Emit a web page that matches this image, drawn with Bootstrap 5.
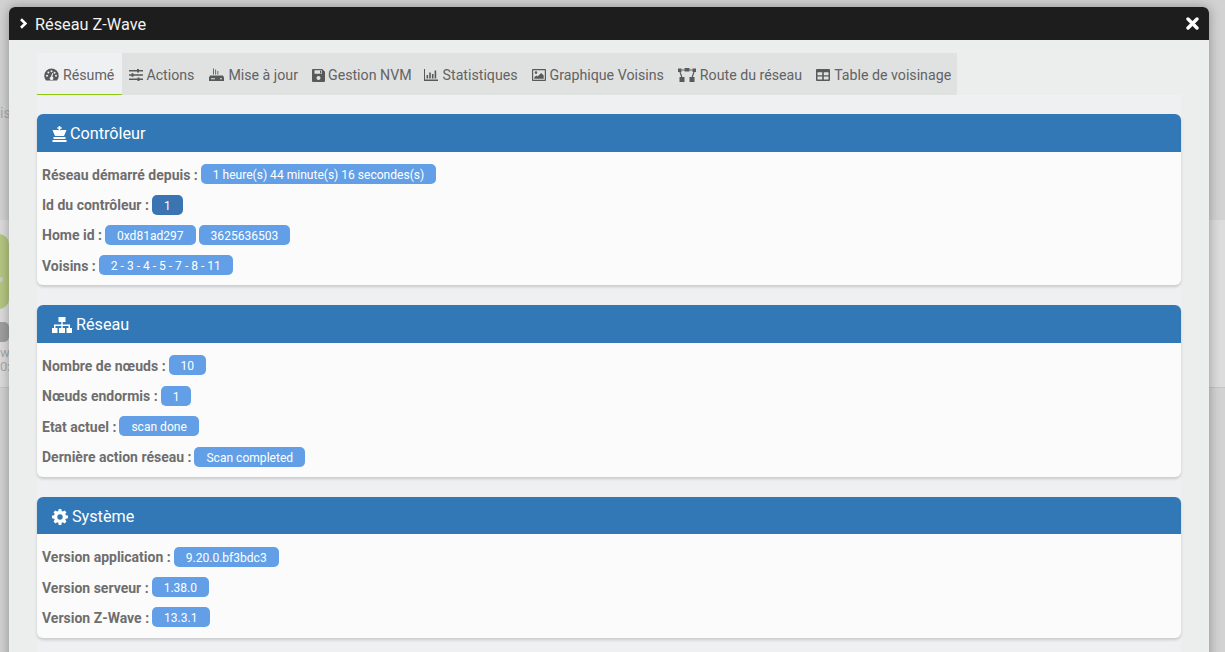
<!DOCTYPE html>
<html lang="fr"><head><meta charset="utf-8"><title>Réseau Z-Wave</title>
<link href="https://cdn.jsdelivr.net/npm/bootstrap@5.3.0/dist/css/bootstrap.min.css" rel="stylesheet">
<style>
html,body{height:652px;overflow:hidden}
body{font-family:Roboto,"Liberation Sans",sans-serif;background:#d2d2d2;position:relative;color:#6b6b6b}
.bg-band{position:absolute;left:0;right:0;top:220px;height:168px;background:#dcdcdc;border-bottom:1px solid #c6c6c6}
.bg-top{position:absolute;left:0;top:103px;font-size:14px;color:#a9a9a9}
.bg-green{position:absolute;left:-60px;top:234px;width:69px;height:75px;background:#b4c681;border-radius:10px}
.bg-dot{position:absolute;left:0;top:277px;width:3px;height:5px;background:#c8ccc0;border-radius:0 3px 3px 0}
.bg-pill{position:absolute;left:-30px;top:322px;width:39px;height:20px;background:#9f9f9f;border-radius:5px}
.bg-txt{position:absolute;left:0;font-size:13px;line-height:14px;color:#a9a9a9;white-space:nowrap}
.bg-l1{top:346px}
.bg-l2{top:360px}
.zw-window{position:absolute;left:9px;top:7px;width:1200px;height:700px;background:#eceeee;border-radius:6px 6px 0 0;box-shadow:0 0 12px rgba(0,0,0,.32);overflow:hidden}
.zw-title{height:33px;background:#1d1d1d;color:#f2f2f2;font-size:16.3px;padding:0 10px}
.zw-title .ttl{margin-left:7px;padding-top:2px;line-height:24px;font-weight:400}
.zw-body{padding:13px 28px 0}
.zw-tabs{width:920px;height:42px;background:#e0e2e1;flex-wrap:nowrap;border:0;margin:0}
.zw-tabs .nav-link{height:42px;margin:0;padding:2px 7px 0;border:0;border-radius:0;color:#636363;font-size:14.2px;line-height:40px;display:flex;align-items:center;gap:4px;white-space:nowrap;background:none}
.zw-tabs .nav-link.active{background:#eff0f2;color:#636363;border:0;border-bottom:1px solid #8fc90c;padding-right:8px;padding-bottom:0}
.zw-tabs svg{fill:#595959;flex:none}
.zw-tabs li:nth-child(2) .nav-link{gap:3px}
.zw-tabs li:nth-child(3) .nav-link{padding-left:8px}
.zw-tabs li:nth-child(4) .nav-link{padding-right:5px;gap:3px}
.zw-tabs li:nth-child(5) .nav-link{gap:5px}
.zw-tabs li:nth-child(8) .nav-link{padding-right:6px}
.zw-panel{background:#eff0f2;padding:19px 0 0;height:600px}
.zw-card{background:#fbfbfb;border:0;border-radius:6px;box-shadow:0 2px 3px rgba(0,0,0,.16);margin-bottom:20px;overflow:hidden}
.zw-card:nth-child(3){margin-top:20.2px}
.zw-head{background:#3278b6;color:#fff;font-size:16.2px;height:37.6px;padding:3px 15px 0;display:flex;align-items:center;gap:3px}
.zw-head svg{fill:#fff;flex:none;margin-right:1px}
.zw-card:nth-child(1) .zw-head svg{margin-right:0}
.zw-card:nth-child(3) .zw-head{height:37.4px}
.zw-content{padding:7.275px 5px 4.525px}
.zw-card:nth-child(2) .zw-content{padding-bottom:4.825px}
.zw-card:nth-child(3) .zw-content{padding-bottom:5px}
.zw-row{height:30.45px;display:flex;align-items:center;font-size:14px;color:#6e6e6e;white-space:nowrap}
.zw-row b{font-weight:700;margin-right:3px;padding-top:2px}
.zw-pill{height:20px;padding:1px 12px 0;line-height:20px;background:#629fe6;color:#fff;border-radius:5px;font-size:12.05px;font-weight:400;margin-right:3px}
.zw-pill.dark{background:#3a74b2}
</style></head>
<body>
<div class="bg-band"></div>
<div class="bg-top">is</div>
<div class="bg-green"></div>
<div class="bg-dot"></div>
<div class="bg-pill"></div>
<div class="bg-txt bg-l1">wi</div>
<div class="bg-txt bg-l2">0x</div>

<div class="zw-window">
  <div class="zw-title d-flex align-items-center">
    <svg width="9" height="11" viewBox="0 0 9 11"><path d="M2 1.2 6.400 5.500 2 9.800" fill="none" stroke="#fff" stroke-width="2.6"/></svg>
    <span class="ttl">Réseau Z-Wave</span>
    <svg class="ms-auto" width="13" height="13" viewBox="0 0 13 13"><path d="M2 2 11 11M11 2 2 11" stroke="#fff" stroke-width="3.4" stroke-linecap="round"/></svg>
  </div>
  <div class="zw-body">
    <ul class="nav nav-tabs zw-tabs">
      <li class="nav-item"><a class="nav-link active" href="#">
        <svg width="15" height="13" viewBox="0 0 15 13"><path fill-rule="evenodd" d="M7.500 0.500A7.200 7.200 0 0 0 0.300 7.700c0 1.800.6 3.300 1.600 4.600.2.200.4.300.7.300h9.800c.3 0 .5-.1.700-.3 1-1.300 1.600-2.800 1.600-4.600A7.200 7.200 0 0 0 7.500.5ZM3 8.800a1 1 0 1 1 0-2 1 1 0 0 1 0 2Zm1.400-3.400a1 1 0 1 1 0-2 1 1 0 0 1 0 2Zm3.100-1.200a1 1 0 1 1 0-2 1 1 0 0 1 0 2Zm1.900 6.200a1.900 1.900 0 0 1-3.700.4c-.1-.8.3-1.500 1-1.800l1.500-3.600c.1-.3.5-.4.700-.3.3.1.4.4.3.7L8.300 8.400c.6.300 1.100.9 1.100 1.600Zm1.200-4.600a1 1 0 1 1 0-2 1 1 0 0 1 0 2ZM12 8.800a1 1 0 1 1 0-2 1 1 0 0 1 0 2Z"/></svg>
        <span>Résumé</span></a></li>
      <li class="nav-item"><a class="nav-link" href="#">
        <svg width="14" height="12" viewBox="0 0 14 12"><path d="M0 1h8V0h2v1h4v1.500h-4v1H8v-1H0zM0 5.250h2.500v-1h2v1H14v1.500H4.500v1h-2v-1H0zM0 9.500h8.500v-1h2v1H14V11h-3.500v1h-2v-1H0z"/></svg>
        <span>Actions</span></a></li>
      <li class="nav-item"><a class="nav-link" href="#">
        <svg width="15" height="14" viewBox="0 0 15 14"><path d="M0 9.500 1 7.500h13l1 2V13H0zM2 10.300v1h4v-1zM11 10.300v1h2v-1zM4 .5h.9v6H4zM6.200 1.500h.9v5h-.9zM8.400 3h.9v3.500h-.9z"/></svg>
        <span>Mise à jour</span></a></li>
      <li class="nav-item"><a class="nav-link" href="#">
        <svg width="13" height="13" viewBox="0 0 13 13"><path fill-rule="evenodd" d="M1 0h9.300L13 2.700V12a1 1 0 0 1-1 1H1a1 1 0 0 1-1-1V1a1 1 0 0 1 1-1Zm1.500 1.300v3.500h7.500V1.300ZM8 1.800h1.300v2.400H8ZM6.500 7a2 2 0 1 0 0 4 2 2 0 0 0 0-4Z"/></svg>
        <span>Gestion NVM</span></a></li>
      <li class="nav-item"><a class="nav-link" href="#">
        <svg width="14" height="12" viewBox="0 0 14 12"><path d="M0 0h1v10.500h13V12H0zM2.500 6h1.600v3.500H2.500zM5.200 3.500h1.600v6H5.200zM7.900 5h1.600v4.500H7.900zM10.600 1.500h1.600v8h-1.600z"/></svg>
        <span>Statistiques</span></a></li>
      <li class="nav-item"><a class="nav-link" href="#">
        <svg width="14" height="12" viewBox="0 0 14 12"><path fill-rule="evenodd" d="M.8 0h12.400c.5 0 .8.400.8.800v10.400c0 .4-.3.800-.8.800H.8a.8.8 0 0 1-.8-.8V.8C0 .4.300 0 .8 0Zm.4 1.200v9.600h11.600V1.200ZM4 2.300a1.300 1.300 0 1 1 0 2.600 1.300 1.300 0 0 1 0-2.600ZM2.300 9.700V8.200l2-1.800 1.300 1.200L9.200 4l2.500 2.500v3.200Z"/></svg>
        <span>Graphique Voisins</span></a></li>
      <li class="nav-item"><a class="nav-link" href="#">
        <svg width="18" height="14" viewBox="0 0 18 14"><path d="M0 .5h3.500v3.500H0zM6.500 0h5v3.500h-5zM14.500.5H18V4h-3.500zM1.500 9h5v5h-5zM11.500 9h5v5h-5z"/><path d="M2 4 3.800 9M16 4 14.200 9M3.500 2h3M11.500 2h3" stroke="#595959" stroke-width="1.200" fill="none"/></svg>
        <span>Route du réseau</span></a></li>
      <li class="nav-item"><a class="nav-link" href="#">
        <svg width="14" height="12" viewBox="0 0 14 12"><path fill-rule="evenodd" d="M1 0h12a1 1 0 0 1 1 1v10a1 1 0 0 1-1 1H1a1 1 0 0 1-1-1V1a1 1 0 0 1 1-1Zm.5 3.300v2.900h4.700V3.300Zm6.300 0v2.900h4.700V3.300ZM1.500 7.500v3h4.700v-3Zm6.300 0v3h4.700v-3Z"/></svg>
        <span>Table de voisinage</span></a></li>
    </ul>
    <div class="zw-panel">
      <div class="zw-card">
        <div class="zw-head">
          <svg width="15" height="16" viewBox="0 0 15 16"><path d="M6.700 0h1.600v1.300h1.400v1.500H8.300v1.600c.5-.2 1-.3 1.700-.3h4.500L12 10H3L.5 4.100H5c.7 0 1.200.1 1.700.3V2.800H5.300V1.300h1.400zM1.500 11h12v2h-12zM.5 14h14v2H.5z"/></svg>
          <span>Contrôleur</span></div>
        <div class="zw-content">
          <div class="zw-row"><b>Réseau démarré depuis :</b><span class="zw-pill">1 heure(s) 44 minute(s) 16 secondes(s)</span></div>
          <div class="zw-row"><b>Id du contrôleur :</b><span class="zw-pill dark">1</span></div>
          <div class="zw-row"><b>Home id :</b><span class="zw-pill">0xd81ad297</span><span class="zw-pill">3625636503</span></div>
          <div class="zw-row"><b>Voisins :</b><span class="zw-pill">2 - 3 - 4 - 5 - 7 - 8 - 11</span></div>
        </div>
      </div>
      <div class="zw-card">
        <div class="zw-head">
          <svg width="20" height="16" viewBox="0 0 20 16"><path d="M6.500 0h7v5h-2.800v2.500H18V11h2v5h-5.500v-5h2V9H10.700v2H13v5H7v-5h2.300V9H3.500v2h2v5H0v-5h2V7.500h7.300V5H6.500z"/></svg>
          <span>Réseau</span></div>
        <div class="zw-content">
          <div class="zw-row"><b>Nombre de nœuds :</b><span class="zw-pill">10</span></div>
          <div class="zw-row"><b>Nœuds endormis :</b><span class="zw-pill">1</span></div>
          <div class="zw-row"><b>Etat actuel :</b><span class="zw-pill">scan done</span></div>
          <div class="zw-row"><b>Dernière action réseau :</b><span class="zw-pill">Scan completed</span></div>
        </div>
      </div>
      <div class="zw-card">
        <div class="zw-head">
          <svg width="16" height="16" viewBox="0 0 16 16"><path fill-rule="evenodd" d="M6.700 0h2.600l.4 2.100c.4.100.8.300 1.100.5l1.800-1.200 1.900 1.900-1.200 1.800c.2.300.4.700.5 1.100l2.200.4v2.700l-2.200.4c-.1.400-.3.800-.5 1.100l1.200 1.800-1.900 1.900-1.800-1.200c-.3.200-.7.400-1.100.5L9.300 16H6.700l-.4-2.200c-.4-.1-.8-.3-1.100-.5l-1.800 1.200-1.900-1.900 1.200-1.800c-.2-.3-.4-.7-.5-1.100L0 9.300V6.600l2.200-.4c.1-.4.300-.8.500-1.100L1.500 3.300l1.900-1.900 1.800 1.200c.3-.2.700-.4 1.100-.5ZM8 5.300a2.700 2.700 0 1 0 0 5.400 2.700 2.700 0 0 0 0-5.400Z"/></svg>
          <span>Système</span></div>
        <div class="zw-content">
          <div class="zw-row"><b>Version application :</b><span class="zw-pill">9.20.0.bf3bdc3</span></div>
          <div class="zw-row"><b>Version serveur :</b><span class="zw-pill">1.38.0</span></div>
          <div class="zw-row"><b>Version Z-Wave :</b><span class="zw-pill">13.3.1</span></div>
        </div>
      </div>
    </div>
  </div>
</div>
<script src="https://cdn.jsdelivr.net/npm/bootstrap@5.3.0/dist/js/bootstrap.bundle.min.js"></script>
</body></html>
